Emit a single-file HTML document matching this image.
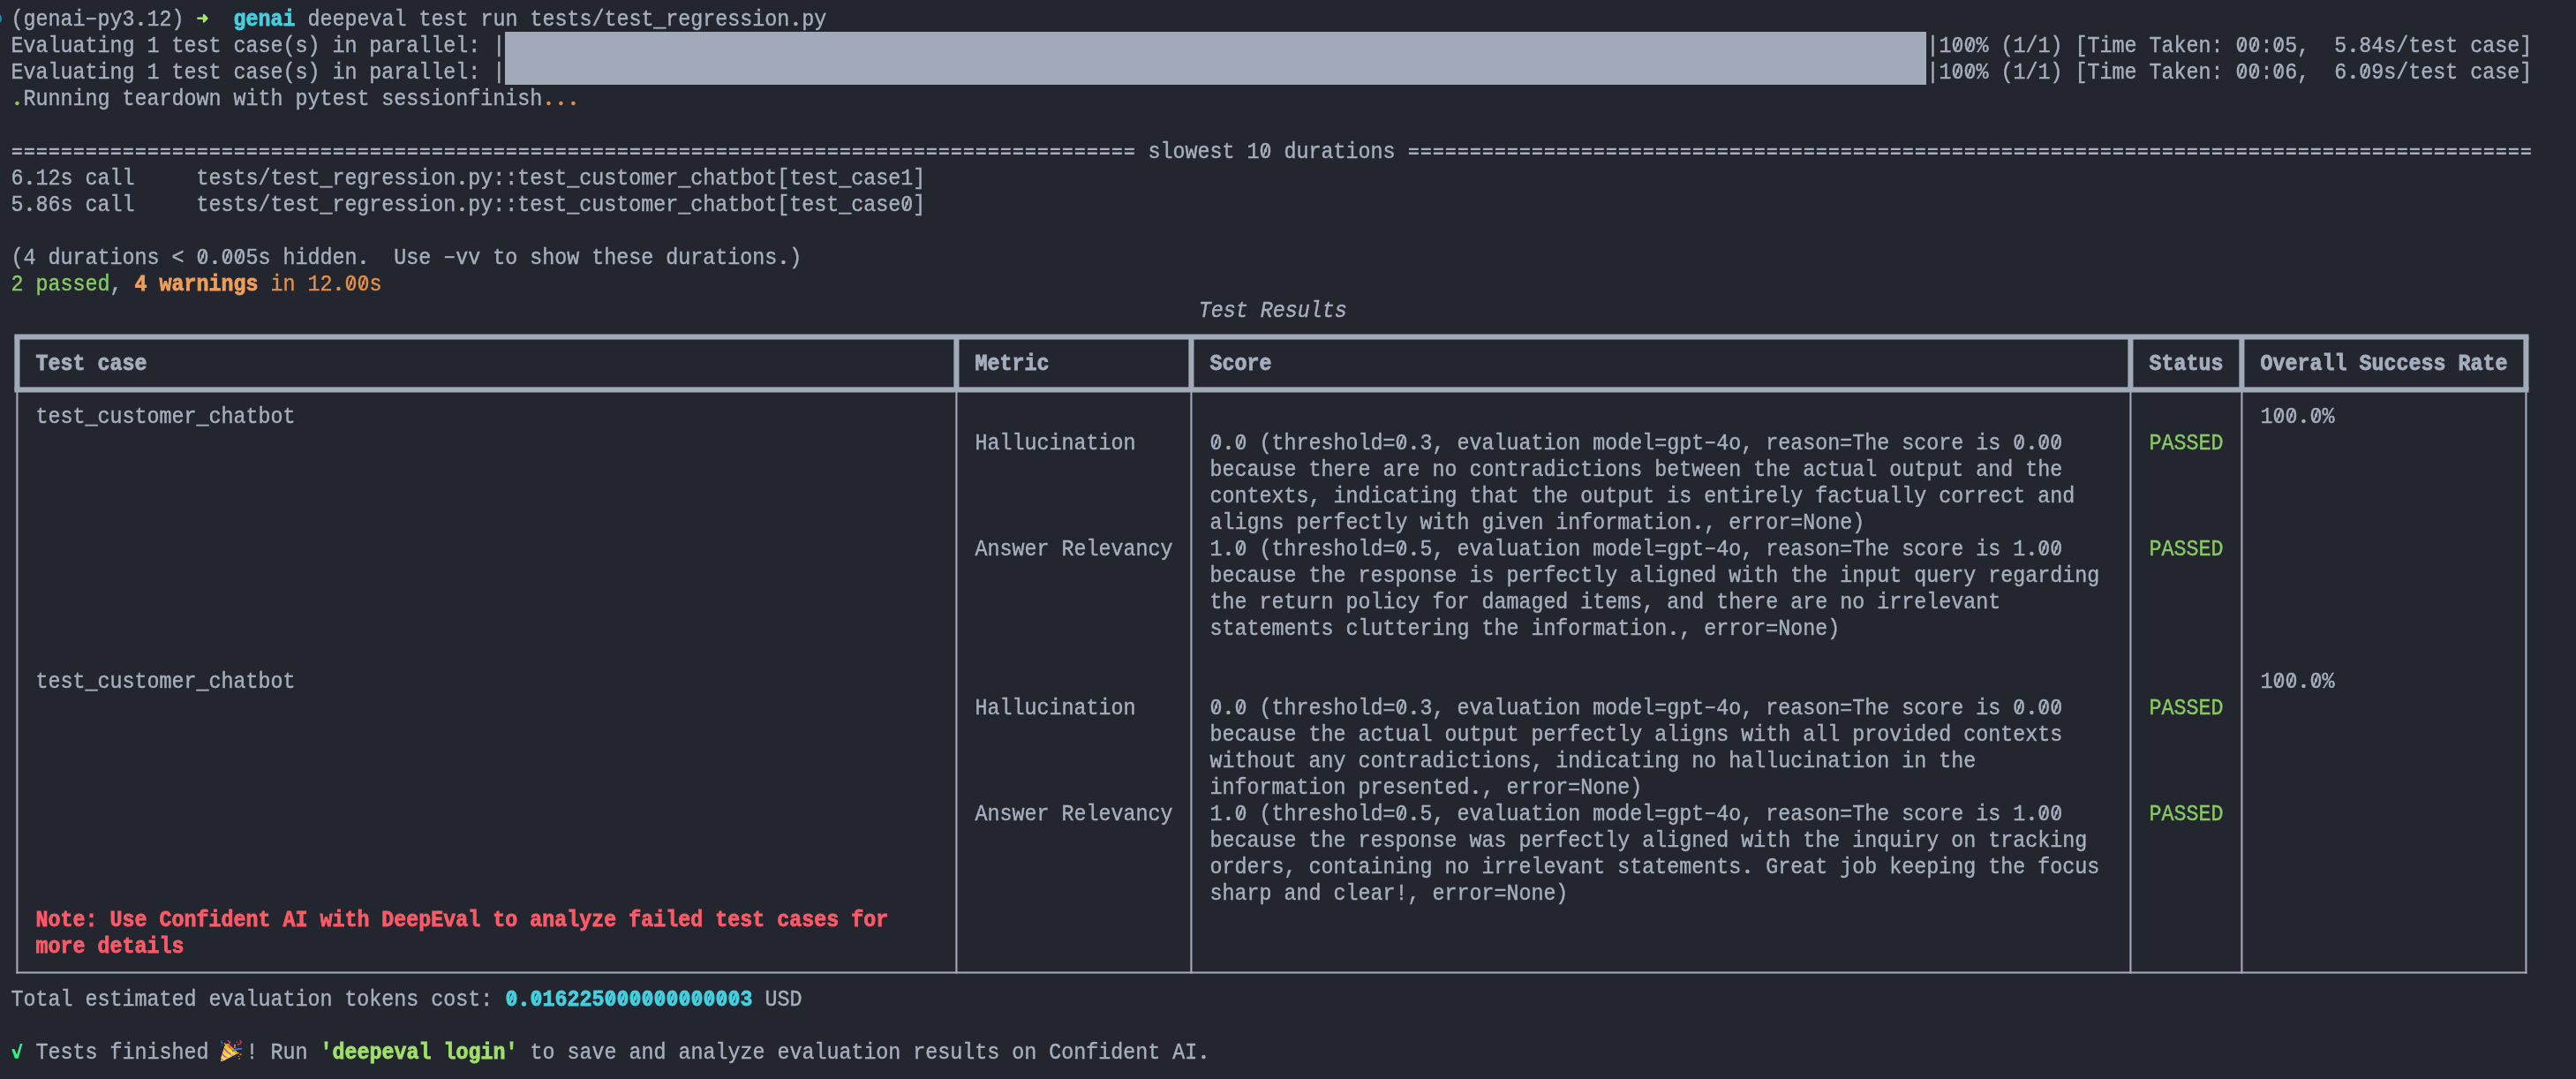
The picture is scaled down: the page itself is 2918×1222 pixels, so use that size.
<!DOCTYPE html>
<html><head><meta charset="utf-8"><title>terminal</title>
<style>
html,body{margin:0;padding:0;background:#23262e;}
body{width:2918px;height:1222px;position:relative;overflow:hidden;
 font-family:"Liberation Mono",monospace;font-size:23.33px;line-height:30px;color:#a6aebd;}
.t{position:absolute;white-space:pre;transform:scaleY(1.065);transform-origin:0 21.3px;-webkit-text-stroke:0.4px currentColor;letter-spacing:-0.0003px;height:30px;line-height:30px;font-kerning:none;font-variant-ligatures:none;}
.r{position:absolute;}
#L{position:absolute;left:0;top:0;width:2918px;height:1222px;will-change:transform;}
</style></head><body>
<div id="L">
<div class="t" style="left:12.42px;top:7.70px;">(genai py3 12)</div>
<div class="t" style="left:264.42px;top:7.70px;color:#48cede;font-weight:bold;-webkit-text-stroke-width:0.75px;">genai</div>
<div class="t" style="left:348.42px;top:7.70px;">deepeval test run tests/test_regression py</div>
<svg class="r" style="left:222.42px;top:6.00px" width="16" height="30" viewBox="0 0 16 30"><path d="M2.4 14.7 H9.5" fill="none" stroke="#a2e570" stroke-width="2.6" stroke-linecap="round"/><path d="M9.0 11.1 L12.5 14.75 L9.0 18.5 Z" fill="#a2e570" stroke="#a2e570" stroke-width="2.4" stroke-linejoin="round"/></svg>
<div class="t" style="left:12.42px;top:37.70px;">Evaluating 1 test case(s) in parallel: |</div>
<div class="t" style="left:2182.42px;top:37.70px;">|100% (1/1) [Time Taken: 00:05,  5 84s/test case]</div>
<div class="t" style="left:12.42px;top:67.70px;">Evaluating 1 test case(s) in parallel: |</div>
<div class="t" style="left:2182.42px;top:67.70px;">|100% (1/1) [Time Taken: 00:06,  6 09s/test case]</div>
<div class="r" style="left:572.00px;top:36.00px;width:1610.00px;height:60.00px;background:#a2a9b8;"></div>
<div class="t" style="left:12.42px;top:97.70px;color:#86c866;"> </div>
<div class="t" style="left:26.42px;top:97.70px;">Running teardown with pytest sessionfinish</div>
<div class="t" style="left:614.42px;top:97.70px;color:#dc9152;">   </div>
<div class="t" style="left:1300.42px;top:157.70px;">slowest 10 durations</div>
<div class="t" style="left:12.42px;top:187.70px;">6 12s call     tests/test_regression py::test_customer_chatbot[test_case1]</div>
<div class="t" style="left:12.42px;top:217.70px;">5 86s call     tests/test_regression py::test_customer_chatbot[test_case0]</div>
<div class="t" style="left:12.42px;top:277.70px;">(4 durations &lt; 0 005s hidden   Use  vv to show these durations )</div>
<div class="t" style="left:12.42px;top:307.70px;color:#86c866;">2 passed</div>
<div class="t" style="left:124.42px;top:307.70px;">,</div>
<div class="t" style="left:152.42px;top:307.70px;color:#ee9e59;font-weight:bold;-webkit-text-stroke-width:0.75px;">4 warnings</div>
<div class="t" style="left:306.42px;top:307.70px;color:#dc9152;">in 12 00s</div>
<div class="t" style="left:1356.42px;top:337.70px;font-style:italic;margin-left:1.3px;">Test Results</div>
<div class="t" style="left:40.42px;top:397.70px;font-weight:bold;-webkit-text-stroke-width:0.75px;">Test case</div>
<div class="t" style="left:1104.42px;top:397.70px;font-weight:bold;-webkit-text-stroke-width:0.75px;">Metric</div>
<div class="t" style="left:1370.42px;top:397.70px;font-weight:bold;-webkit-text-stroke-width:0.75px;">Score</div>
<div class="t" style="left:2434.42px;top:397.70px;font-weight:bold;-webkit-text-stroke-width:0.75px;">Status</div>
<div class="t" style="left:2560.42px;top:397.70px;font-weight:bold;-webkit-text-stroke-width:0.75px;">Overall Success Rate</div>
<div class="t" style="left:40.42px;top:457.70px;">test_customer_chatbot</div>
<div class="t" style="left:2560.42px;top:457.70px;">100 0%</div>
<div class="t" style="left:1104.42px;top:487.70px;">Hallucination</div>
<div class="t" style="left:2434.42px;top:487.70px;color:#86c866;">PASSED</div>
<div class="t" style="left:1370.42px;top:487.70px;">0 0 (threshold=0 3, evaluation model=gpt 4o, reason=The score is 0 00</div>
<div class="t" style="left:1370.42px;top:517.70px;">because there are no contradictions between the actual output and the</div>
<div class="t" style="left:1370.42px;top:547.70px;">contexts, indicating that the output is entirely factually correct and</div>
<div class="t" style="left:1370.42px;top:577.70px;">aligns perfectly with given information , error=None)</div>
<div class="t" style="left:1104.42px;top:607.70px;">Answer Relevancy</div>
<div class="t" style="left:2434.42px;top:607.70px;color:#86c866;">PASSED</div>
<div class="t" style="left:1370.42px;top:607.70px;">1 0 (threshold=0 5, evaluation model=gpt 4o, reason=The score is 1 00</div>
<div class="t" style="left:1370.42px;top:637.70px;">because the response is perfectly aligned with the input query regarding</div>
<div class="t" style="left:1370.42px;top:667.70px;">the return policy for damaged items, and there are no irrelevant</div>
<div class="t" style="left:1370.42px;top:697.70px;">statements cluttering the information , error=None)</div>
<div class="t" style="left:40.42px;top:757.70px;">test_customer_chatbot</div>
<div class="t" style="left:2560.42px;top:757.70px;">100 0%</div>
<div class="t" style="left:1104.42px;top:787.70px;">Hallucination</div>
<div class="t" style="left:2434.42px;top:787.70px;color:#86c866;">PASSED</div>
<div class="t" style="left:1370.42px;top:787.70px;">0 0 (threshold=0 3, evaluation model=gpt 4o, reason=The score is 0 00</div>
<div class="t" style="left:1370.42px;top:817.70px;">because the actual output perfectly aligns with all provided contexts</div>
<div class="t" style="left:1370.42px;top:847.70px;">without any contradictions, indicating no hallucination in the</div>
<div class="t" style="left:1370.42px;top:877.70px;">information presented , error=None)</div>
<div class="t" style="left:1104.42px;top:907.70px;">Answer Relevancy</div>
<div class="t" style="left:2434.42px;top:907.70px;color:#86c866;">PASSED</div>
<div class="t" style="left:1370.42px;top:907.70px;">1 0 (threshold=0 5, evaluation model=gpt 4o, reason=The score is 1 00</div>
<div class="t" style="left:1370.42px;top:937.70px;">because the response was perfectly aligned with the inquiry on tracking</div>
<div class="t" style="left:1370.42px;top:967.70px;">orders, containing no irrelevant statements  Great job keeping the focus</div>
<div class="t" style="left:1370.42px;top:997.70px;">sharp and clear!, error=None)</div>
<div class="t" style="left:40.42px;top:1027.70px;color:#fb5a68;font-weight:bold;-webkit-text-stroke-width:0.75px;">Note: Use Confident AI with DeepEval to analyze failed test cases for</div>
<div class="t" style="left:40.42px;top:1057.70px;color:#fb5a68;font-weight:bold;-webkit-text-stroke-width:0.75px;">more details</div>
<div class="t" style="left:12.42px;top:1117.70px;">Total estimated evaluation tokens cost:</div>
<div class="t" style="left:572.42px;top:1117.70px;color:#48cede;font-weight:bold;-webkit-text-stroke-width:0.75px;">0 016225000000000003</div>
<div class="t" style="left:866.42px;top:1117.70px;">USD</div>
<svg class="r" style="left:12.42px;top:1176.00px" width="16" height="30" viewBox="0 0 16 30"><path d="M1.2 12.2 L4.3 11.9 L7.1 18.6 L10.9 5.9 L13.5 6.1 L8.7 22.7 L4.9 22.7 Z" fill="#33ec8a"/></svg>
<div class="t" style="left:40.42px;top:1177.70px;">Tests finished</div>
<div class="t" style="left:278.42px;top:1177.70px;">! Run</div>
<div class="t" style="left:362.42px;top:1177.70px;color:#9fe06b;font-weight:bold;-webkit-text-stroke-width:0.75px;">&#x27;deepeval login&#x27;</div>
<div class="t" style="left:600.42px;top:1177.70px;">to save and analyze evaluation results on Confident AI </div>
<svg class="r" style="left:250.42px;top:1176.00px" width="28" height="30" viewBox="0 0 28 30"><defs><linearGradient id="cg" x1="0" y1="0" x2="1" y2="1"><stop offset="0" stop-color="#e8a526"/><stop offset="0.55" stop-color="#fbe23a"/><stop offset="1" stop-color="#e8941e"/></linearGradient></defs><polygon points="-0.49,24.23 5.10,6.51 8.77,6.51 19.20,15.68 18.99,17.35 2.10,26.11 0.22,25.69" fill="url(#cg)"/><polygon points="5.43,6.30 8.35,6.09 19.20,15.68 18.78,17.14 12.94,14.02 7.94,9.85" fill="#e09520"/><path d="M4.60 11.93 L7.94 15.68 L12.94 19.02" fill="none" stroke="#a545e0" stroke-width="1.5" stroke-linecap="round" stroke-linejoin="round"/><path d="M11.27 18.40 L12.94 19.02" fill="none" stroke="#f58be8" stroke-width="1.5" stroke-linecap="round" stroke-linejoin="round"/><path d="M2.31 18.19 L4.60 20.69 L7.31 22.02" fill="none" stroke="#a545e0" stroke-width="1.4" stroke-linecap="round" stroke-linejoin="round"/><path d="M6.27 21.73 L7.52 22.15" fill="none" stroke="#f58be8" stroke-width="1.4" stroke-linecap="round" stroke-linejoin="round"/><path d="M0.22 22.86 L2.52 24.94" fill="none" stroke="#a545e0" stroke-width="1.3" stroke-linecap="round" stroke-linejoin="round"/><path d="M8.15 2.34 L9.81 4.43 L10.23 10.47" fill="none" stroke="#ef3f5c" stroke-width="1.4" stroke-linecap="round" stroke-linejoin="round"/><path d="M13.78 14.02 L17.11 12.35 L23.37 11.72" fill="none" stroke="#3b7be2" stroke-width="1.7" stroke-linecap="round" stroke-linejoin="round"/><path d="M0.22 4.22 L2.10 5.68" fill="none" stroke="#2b62d6" stroke-width="1.6" stroke-linecap="round" stroke-linejoin="round"/><path d="M1.06 2.34 L0.64 3.80" fill="none" stroke="#2b62d6" stroke-width="1.0" stroke-linecap="round" stroke-linejoin="round"/><rect x="0.64" y="6.93" width="1.46" height="1.46" rx="0.5" fill="#26468f"/><rect x="10.44" y="2.97" width="1.46" height="1.88" rx="0.5" fill="#2b62d6"/><rect x="11.90" y="6.72" width="1.67" height="1.25" rx="0.5" fill="#25519f"/><rect x="3.98" y="5.26" width="1.67" height="1.46" rx="0.5" fill="#d9c233"/><path d="M21.91 2.34 L23.37 4.01 L22.12 6.09 L19.61 6.51" fill="none" stroke="#d23c5e" stroke-width="1.3" stroke-linecap="round" stroke-linejoin="round"/><rect x="17.53" y="3.17" width="1.67" height="1.88" rx="0.5" fill="#a83250"/><rect x="18.78" y="6.51" width="1.67" height="2.09" rx="0.5" fill="#a83250"/><path d="M16.07 7.34 L15.86 10.47" fill="none" stroke="#f0709a" stroke-width="1.6" stroke-linecap="round" stroke-linejoin="round"/><rect x="0.85" y="14.02" width="1.75" height="1.08" rx="0.5" fill="#c5384a"/><rect x="19.11" y="15.89" width="1.58" height="1.46" rx="0.5" fill="#e6d044"/><rect x="21.49" y="17.14" width="2.09" height="1.88" rx="0.5" fill="#dd8a2c"/><rect x="19.53" y="19.65" width="1.75" height="1.46" rx="0.5" fill="#c87a28"/><rect x="20.45" y="22.15" width="1.50" height="1.71" rx="0.5" fill="#ee7fa2"/><rect x="15.23" y="20.06" width="1.67" height="1.29" rx="0.5" fill="#285bc4"/></svg>
<div class="r" style="left:-11.9px;top:14.1px;width:14px;height:14px;border-radius:50%;background:#2484b3;"></div>
<svg class="r" style="left:0;top:0" width="2918" height="1222" viewBox="0 0 2918 1222"><circle cx="159.42" cy="27.00" r="2.25" fill="#a6aebd"/><rect x="97.92" y="20.10" width="10.80" height="2.10" fill="#a6aebd"/><circle cx="901.42" cy="27.00" r="2.25" fill="#a6aebd"/><line x1="2215.32" y1="56.00" x2="2219.52" y2="44.50" stroke="#a6aebd" stroke-width="1.9"/><line x1="2229.32" y1="56.00" x2="2233.52" y2="44.50" stroke="#a6aebd" stroke-width="1.9"/><line x1="2537.32" y1="56.00" x2="2541.52" y2="44.50" stroke="#a6aebd" stroke-width="1.9"/><line x1="2551.32" y1="56.00" x2="2555.52" y2="44.50" stroke="#a6aebd" stroke-width="1.9"/><line x1="2579.32" y1="56.00" x2="2583.52" y2="44.50" stroke="#a6aebd" stroke-width="1.9"/><circle cx="2665.42" cy="57.00" r="2.25" fill="#a6aebd"/><line x1="2215.32" y1="86.00" x2="2219.52" y2="74.50" stroke="#a6aebd" stroke-width="1.9"/><line x1="2229.32" y1="86.00" x2="2233.52" y2="74.50" stroke="#a6aebd" stroke-width="1.9"/><line x1="2537.32" y1="86.00" x2="2541.52" y2="74.50" stroke="#a6aebd" stroke-width="1.9"/><line x1="2551.32" y1="86.00" x2="2555.52" y2="74.50" stroke="#a6aebd" stroke-width="1.9"/><line x1="2579.32" y1="86.00" x2="2583.52" y2="74.50" stroke="#a6aebd" stroke-width="1.9"/><circle cx="2665.42" cy="87.00" r="2.25" fill="#a6aebd"/><line x1="2677.32" y1="86.00" x2="2681.52" y2="74.50" stroke="#a6aebd" stroke-width="1.9"/><circle cx="19.42" cy="117.00" r="2.25" fill="#86c866"/><circle cx="621.42" cy="117.00" r="2.25" fill="#dc9152"/><circle cx="635.42" cy="117.00" r="2.25" fill="#dc9152"/><circle cx="649.42" cy="117.00" r="2.25" fill="#dc9152"/><line x1="1431.32" y1="176.00" x2="1435.52" y2="164.50" stroke="#a6aebd" stroke-width="1.9"/><circle cx="33.42" cy="207.00" r="2.25" fill="#a6aebd"/><circle cx="523.42" cy="207.00" r="2.25" fill="#a6aebd"/><circle cx="33.42" cy="237.00" r="2.25" fill="#a6aebd"/><circle cx="523.42" cy="237.00" r="2.25" fill="#a6aebd"/><line x1="1025.32" y1="236.00" x2="1029.52" y2="224.50" stroke="#a6aebd" stroke-width="1.9"/><line x1="227.32" y1="296.00" x2="231.52" y2="284.50" stroke="#a6aebd" stroke-width="1.9"/><circle cx="243.42" cy="297.00" r="2.25" fill="#a6aebd"/><line x1="255.32" y1="296.00" x2="259.52" y2="284.50" stroke="#a6aebd" stroke-width="1.9"/><line x1="269.32" y1="296.00" x2="273.52" y2="284.50" stroke="#a6aebd" stroke-width="1.9"/><circle cx="411.42" cy="297.00" r="2.25" fill="#a6aebd"/><circle cx="887.42" cy="297.00" r="2.25" fill="#a6aebd"/><rect x="503.92" y="290.10" width="10.80" height="2.10" fill="#a6aebd"/><circle cx="383.42" cy="327.00" r="2.25" fill="#dc9152"/><line x1="395.32" y1="326.00" x2="399.52" y2="314.50" stroke="#dc9152" stroke-width="1.9"/><line x1="409.32" y1="326.00" x2="413.52" y2="314.50" stroke="#dc9152" stroke-width="1.9"/><rect x="16.37" y="378.45" width="2848.10" height="6.10" fill="#a2a9b8"/><rect x="16.37" y="438.35" width="2848.10" height="6.10" fill="#a2a9b8"/><rect x="16.37" y="381.50" width="6.10" height="59.90" fill="#a2a9b8"/><rect x="1080.37" y="381.50" width="6.10" height="59.90" fill="#a2a9b8"/><rect x="1346.37" y="381.50" width="6.10" height="59.90" fill="#a2a9b8"/><rect x="2410.37" y="381.50" width="6.10" height="59.90" fill="#a2a9b8"/><rect x="2536.37" y="381.50" width="6.10" height="59.90" fill="#a2a9b8"/><rect x="2858.37" y="381.50" width="6.10" height="59.90" fill="#a2a9b8"/><rect x="18.37" y="441.40" width="2.10" height="661.15" fill="#a2a9b8"/><rect x="1082.37" y="441.40" width="2.10" height="661.15" fill="#a2a9b8"/><rect x="1348.37" y="441.40" width="2.10" height="661.15" fill="#a2a9b8"/><rect x="2412.37" y="441.40" width="2.10" height="661.15" fill="#a2a9b8"/><rect x="2538.37" y="441.40" width="2.10" height="661.15" fill="#a2a9b8"/><rect x="2860.37" y="441.40" width="2.10" height="661.15" fill="#a2a9b8"/><rect x="18.37" y="1100.45" width="2844.10" height="2.10" fill="#a2a9b8"/><line x1="2579.32" y1="476.00" x2="2583.52" y2="464.50" stroke="#a6aebd" stroke-width="1.9"/><line x1="2593.32" y1="476.00" x2="2597.52" y2="464.50" stroke="#a6aebd" stroke-width="1.9"/><circle cx="2609.42" cy="477.00" r="2.25" fill="#a6aebd"/><line x1="2621.32" y1="476.00" x2="2625.52" y2="464.50" stroke="#a6aebd" stroke-width="1.9"/><line x1="1375.32" y1="506.00" x2="1379.52" y2="494.50" stroke="#a6aebd" stroke-width="1.9"/><circle cx="1391.42" cy="507.00" r="2.25" fill="#a6aebd"/><line x1="1403.32" y1="506.00" x2="1407.52" y2="494.50" stroke="#a6aebd" stroke-width="1.9"/><line x1="1585.32" y1="506.00" x2="1589.52" y2="494.50" stroke="#a6aebd" stroke-width="1.9"/><circle cx="1601.42" cy="507.00" r="2.25" fill="#a6aebd"/><line x1="2285.32" y1="506.00" x2="2289.52" y2="494.50" stroke="#a6aebd" stroke-width="1.9"/><circle cx="2301.42" cy="507.00" r="2.25" fill="#a6aebd"/><line x1="2313.32" y1="506.00" x2="2317.52" y2="494.50" stroke="#a6aebd" stroke-width="1.9"/><line x1="2327.32" y1="506.00" x2="2331.52" y2="494.50" stroke="#a6aebd" stroke-width="1.9"/><rect x="1931.92" y="500.10" width="10.80" height="2.10" fill="#a6aebd"/><circle cx="1923.42" cy="597.00" r="2.25" fill="#a6aebd"/><circle cx="1391.42" cy="627.00" r="2.25" fill="#a6aebd"/><line x1="1403.32" y1="626.00" x2="1407.52" y2="614.50" stroke="#a6aebd" stroke-width="1.9"/><line x1="1585.32" y1="626.00" x2="1589.52" y2="614.50" stroke="#a6aebd" stroke-width="1.9"/><circle cx="1601.42" cy="627.00" r="2.25" fill="#a6aebd"/><circle cx="2301.42" cy="627.00" r="2.25" fill="#a6aebd"/><line x1="2313.32" y1="626.00" x2="2317.52" y2="614.50" stroke="#a6aebd" stroke-width="1.9"/><line x1="2327.32" y1="626.00" x2="2331.52" y2="614.50" stroke="#a6aebd" stroke-width="1.9"/><rect x="1931.92" y="620.10" width="10.80" height="2.10" fill="#a6aebd"/><circle cx="1895.42" cy="717.00" r="2.25" fill="#a6aebd"/><line x1="2579.32" y1="776.00" x2="2583.52" y2="764.50" stroke="#a6aebd" stroke-width="1.9"/><line x1="2593.32" y1="776.00" x2="2597.52" y2="764.50" stroke="#a6aebd" stroke-width="1.9"/><circle cx="2609.42" cy="777.00" r="2.25" fill="#a6aebd"/><line x1="2621.32" y1="776.00" x2="2625.52" y2="764.50" stroke="#a6aebd" stroke-width="1.9"/><line x1="1375.32" y1="806.00" x2="1379.52" y2="794.50" stroke="#a6aebd" stroke-width="1.9"/><circle cx="1391.42" cy="807.00" r="2.25" fill="#a6aebd"/><line x1="1403.32" y1="806.00" x2="1407.52" y2="794.50" stroke="#a6aebd" stroke-width="1.9"/><line x1="1585.32" y1="806.00" x2="1589.52" y2="794.50" stroke="#a6aebd" stroke-width="1.9"/><circle cx="1601.42" cy="807.00" r="2.25" fill="#a6aebd"/><line x1="2285.32" y1="806.00" x2="2289.52" y2="794.50" stroke="#a6aebd" stroke-width="1.9"/><circle cx="2301.42" cy="807.00" r="2.25" fill="#a6aebd"/><line x1="2313.32" y1="806.00" x2="2317.52" y2="794.50" stroke="#a6aebd" stroke-width="1.9"/><line x1="2327.32" y1="806.00" x2="2331.52" y2="794.50" stroke="#a6aebd" stroke-width="1.9"/><rect x="1931.92" y="800.10" width="10.80" height="2.10" fill="#a6aebd"/><circle cx="1671.42" cy="897.00" r="2.25" fill="#a6aebd"/><circle cx="1391.42" cy="927.00" r="2.25" fill="#a6aebd"/><line x1="1403.32" y1="926.00" x2="1407.52" y2="914.50" stroke="#a6aebd" stroke-width="1.9"/><line x1="1585.32" y1="926.00" x2="1589.52" y2="914.50" stroke="#a6aebd" stroke-width="1.9"/><circle cx="1601.42" cy="927.00" r="2.25" fill="#a6aebd"/><circle cx="2301.42" cy="927.00" r="2.25" fill="#a6aebd"/><line x1="2313.32" y1="926.00" x2="2317.52" y2="914.50" stroke="#a6aebd" stroke-width="1.9"/><line x1="2327.32" y1="926.00" x2="2331.52" y2="914.50" stroke="#a6aebd" stroke-width="1.9"/><rect x="1931.92" y="920.10" width="10.80" height="2.10" fill="#a6aebd"/><circle cx="1979.42" cy="987.00" r="2.25" fill="#a6aebd"/><line x1="577.32" y1="1136.00" x2="581.52" y2="1124.50" stroke="#48cede" stroke-width="2.5"/><circle cx="593.42" cy="1137.00" r="2.7" fill="#48cede"/><line x1="605.32" y1="1136.00" x2="609.52" y2="1124.50" stroke="#48cede" stroke-width="2.5"/><line x1="689.32" y1="1136.00" x2="693.52" y2="1124.50" stroke="#48cede" stroke-width="2.5"/><line x1="703.32" y1="1136.00" x2="707.52" y2="1124.50" stroke="#48cede" stroke-width="2.5"/><line x1="717.32" y1="1136.00" x2="721.52" y2="1124.50" stroke="#48cede" stroke-width="2.5"/><line x1="731.32" y1="1136.00" x2="735.52" y2="1124.50" stroke="#48cede" stroke-width="2.5"/><line x1="745.32" y1="1136.00" x2="749.52" y2="1124.50" stroke="#48cede" stroke-width="2.5"/><line x1="759.32" y1="1136.00" x2="763.52" y2="1124.50" stroke="#48cede" stroke-width="2.5"/><line x1="773.32" y1="1136.00" x2="777.52" y2="1124.50" stroke="#48cede" stroke-width="2.5"/><line x1="787.32" y1="1136.00" x2="791.52" y2="1124.50" stroke="#48cede" stroke-width="2.5"/><line x1="801.32" y1="1136.00" x2="805.52" y2="1124.50" stroke="#48cede" stroke-width="2.5"/><line x1="815.32" y1="1136.00" x2="819.52" y2="1124.50" stroke="#48cede" stroke-width="2.5"/><line x1="829.32" y1="1136.00" x2="833.52" y2="1124.50" stroke="#48cede" stroke-width="2.5"/><circle cx="1363.42" cy="1197.00" r="2.25" fill="#a6aebd"/><line x1="13.92" y1="168.95" x2="1286.42" y2="168.95" stroke="#a6aebd" stroke-width="2.2" stroke-dasharray="10.9 3.1"/><line x1="13.92" y1="173.70" x2="1286.42" y2="173.70" stroke="#a6aebd" stroke-width="2.4" stroke-dasharray="10.9 3.1"/><line x1="1595.92" y1="168.95" x2="2868.42" y2="168.95" stroke="#a6aebd" stroke-width="2.2" stroke-dasharray="10.9 3.1"/><line x1="1595.92" y1="173.70" x2="2868.42" y2="173.70" stroke="#a6aebd" stroke-width="2.4" stroke-dasharray="10.9 3.1"/></svg>
</div>
</body></html>
